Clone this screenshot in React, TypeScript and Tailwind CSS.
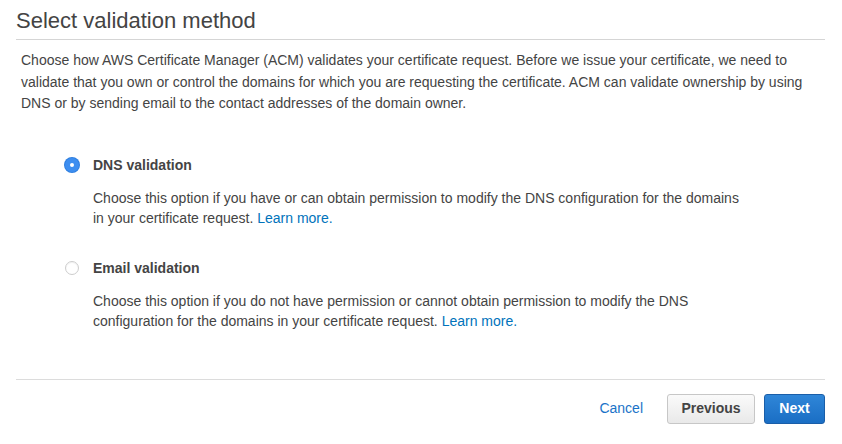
import React, { useState } from 'react'

const font = { fontFamily: '"Liberation Sans", Arial, Helvetica, sans-serif' }

interface OptionProps {
  checked: boolean
  label: string
  lines: string[]
  onSelect: () => void
}

function Radio({ checked }: { checked: boolean }) {
  if (checked) {
    return (
      <span className="flex h-[14px] w-[14px] items-center justify-center rounded-full bg-[#3d8ef0] shadow-[0_0_0_1px_#2f7fe0]">
        <span className="h-[4px] w-[4px] rounded-full bg-white" />
      </span>
    )
  }
  return <span className="block h-[14px] w-[14px] rounded-full border-[1.5px] border-[#cdcdcd] bg-white shadow-[inset_0_1px_1px_rgba(0,0,0,0.06)]" />
}

function ValidationOption({ checked, label, lines, onSelect }: OptionProps) {
  return (
    <div className="flex cursor-pointer flex-col" onClick={onSelect}>
      <div className="flex h-5 items-center">
        <span className="flex w-[28px] items-center">
          <Radio checked={checked} />
        </span>
        <span className="text-[14px] font-bold leading-5 text-[#444]">{label}</span>
      </div>
      <p className="mt-[13px] pl-[28px] text-[14px] leading-5 text-[#444]">
        {lines.map((l, i) => (
          <span key={i} className="block whitespace-nowrap">
            {l}
            {i === lines.length - 1 && (
              <>
                {' '}
                <a className="text-[#0073bb]" href="#">Learn more.</a>
              </>
            )}
          </span>
        ))}
      </p>
    </div>
  )
}

export default function App() {
  const [method, setMethod] = useState<'dns' | 'email'>('dns')

  return (
    <div className="h-[444px] w-[842px] bg-white" style={font}>
      <div className="flex w-[825px] flex-col pl-4">
        <h1 className="border-b border-[#d5d5d5] pb-[4px] pt-[7px] text-[22px] font-normal leading-7 text-[#444]">
          Select validation method
        </h1>

        <p className="mt-[10px] pl-[5px] text-[14px] leading-[21.5px] text-[#444]">
          <span className="block whitespace-nowrap">
            Choose how AWS Certificate Manager (ACM) validates your certificate request. Before we issue your certificate, we need to
          </span>
          <span className="block whitespace-nowrap">
            validate that you own or control the domains for which you are requesting the certificate. ACM can validate ownership by using
          </span>
          <span className="block whitespace-nowrap">
            DNS or by sending email to the contact addresses of the domain owner.
          </span>
        </p>

        <div className="mt-[40px] flex flex-col gap-[30px] pl-[49px]">
          <ValidationOption
            checked={method === 'dns'}
            label="DNS validation"
            onSelect={() => setMethod('dns')}
            lines={[
              'Choose this option if you have or can obtain permission to modify the DNS configuration for the domains',
              'in your certificate request.',
            ]}
          />
          <ValidationOption
            checked={method === 'email'}
            label="Email validation"
            onSelect={() => setMethod('email')}
            lines={[
              'Choose this option if you do not have permission or cannot obtain permission to modify the DNS',
              'configuration for the domains in your certificate request.',
            ]}
          />
        </div>

        <div className="mt-[48px] border-t border-[#dcdcdc]" />

        <div className="mt-[14px] flex items-center justify-end">
          <a href="#" className="mr-6 text-[14px] text-[#1a73c8]">Cancel</a>
          <button className="h-[30px] w-[88px] rounded-[3px] border border-[#c7c7c7] bg-gradient-to-b from-[#fafafa] to-[#e9e9e9] text-[14px] font-bold text-[#444]">
            Previous
          </button>
          <button className="ml-[9px] h-[30px] w-[61px] rounded-[3px] border border-[#1a5ea8] bg-gradient-to-b from-[#2f86d8] to-[#1a6ec4] text-[14px] font-bold text-white">
            Next
          </button>
        </div>
      </div>
    </div>
  )
}
